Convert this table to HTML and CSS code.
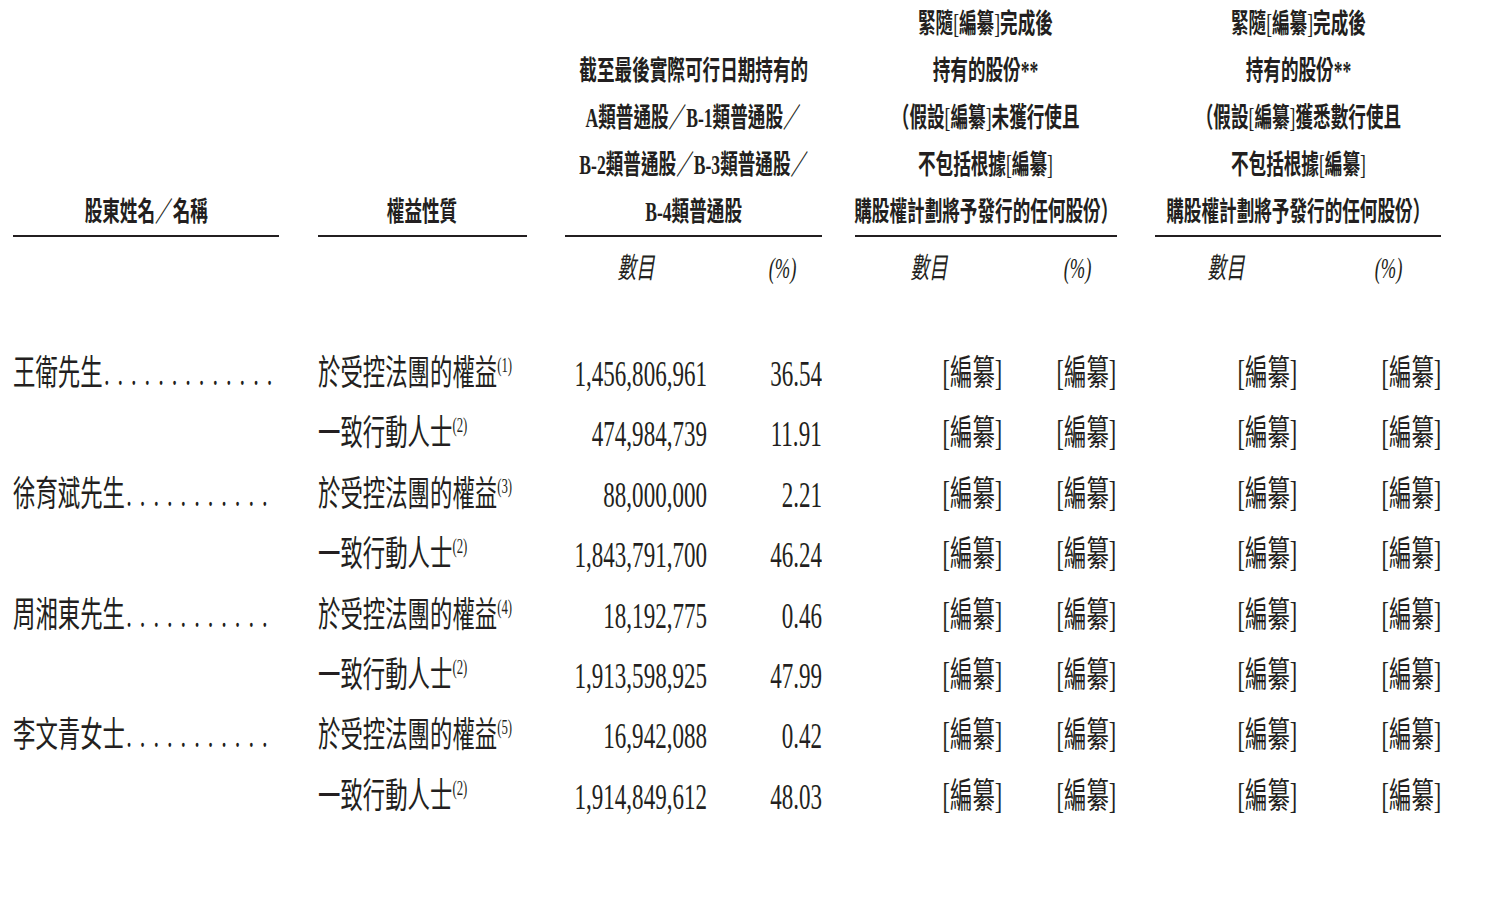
FILE: index.html
```html
<!DOCTYPE html>
<html lang="zh-Hant">
<head>
<meta charset="utf-8">
<title>股東權益</title>
<link rel="stylesheet" href="styles.css">
</head>
<body>
<main class="page">
  <div class="table">
    <div class="th col-name"><div>股東姓名／名稱</div></div>
    <div class="th col-nature"><div>權益性質</div></div>
    <div class="th col-g3">
      <div>截至最後實際可行日期持有的</div>
      <div>A類普通股／B-1類普通股／</div>
      <div>B-2類普通股／B-3類普通股／</div>
      <div>B-4類普通股</div>
    </div>
    <div class="th col-g4">
      <div>緊隨<span class="br">[</span>編纂<span class="br">]</span>完成後</div>
      <div>持有的股份**</div>
      <div>（假設<span class="br">[</span>編纂<span class="br">]</span>未獲行使且</div>
      <div>不包括根據<span class="br">[</span>編纂<span class="br">]</span></div>
      <div>購股權計劃將予發行的任何股份）</div>
    </div>
    <div class="th col-g5">
      <div>緊隨<span class="br">[</span>編纂<span class="br">]</span>完成後</div>
      <div>持有的股份**</div>
      <div>（假設<span class="br">[</span>編纂<span class="br">]</span>獲悉數行使且</div>
      <div>不包括根據<span class="br">[</span>編纂<span class="br">]</span></div>
      <div>購股權計劃將予發行的任何股份）</div>
    </div>

    <div class="sh amount first gap60"><span class="t">數目</span></div>
    <div class="sh pct"><span class="t">(%)</span></div>
    <div class="sh amount gap52"><span class="t">數目</span></div>
    <div class="sh pct"><span class="t">(%)</span></div>
    <div class="sh amount gap60"><span class="t">數目</span></div>
    <div class="sh pct wide"><span class="t">(%)</span></div>

    <div class="td name"><span class="t">王衛先生<span class="dots">.............</span></span></div>
    <div class="td nature"><span class="t">於受控法團的權益<sup>(1)</sup></span></div>
    <div class="td num"><span class="t">1,456,806,961</span></div>
    <div class="td num"><span class="t">36.54</span></div>
    <div class="td red"><span class="t">[編纂]</span></div>
    <div class="td red"><span class="t">[編纂]</span></div>
    <div class="td red"><span class="t">[編纂]</span></div>
    <div class="td red"><span class="t">[編纂]</span></div>

    <div class="td name"></div>
    <div class="td nature"><span class="t">一致行動人士<sup>(2)</sup></span></div>
    <div class="td num"><span class="t">474,984,739</span></div>
    <div class="td num"><span class="t">11.91</span></div>
    <div class="td red"><span class="t">[編纂]</span></div>
    <div class="td red"><span class="t">[編纂]</span></div>
    <div class="td red"><span class="t">[編纂]</span></div>
    <div class="td red"><span class="t">[編纂]</span></div>

    <div class="td name"><span class="t">徐育斌先生<span class="dots">...........</span></span></div>
    <div class="td nature"><span class="t">於受控法團的權益<sup>(3)</sup></span></div>
    <div class="td num"><span class="t">88,000,000</span></div>
    <div class="td num"><span class="t">2.21</span></div>
    <div class="td red"><span class="t">[編纂]</span></div>
    <div class="td red"><span class="t">[編纂]</span></div>
    <div class="td red"><span class="t">[編纂]</span></div>
    <div class="td red"><span class="t">[編纂]</span></div>

    <div class="td name"></div>
    <div class="td nature"><span class="t">一致行動人士<sup>(2)</sup></span></div>
    <div class="td num"><span class="t">1,843,791,700</span></div>
    <div class="td num"><span class="t">46.24</span></div>
    <div class="td red"><span class="t">[編纂]</span></div>
    <div class="td red"><span class="t">[編纂]</span></div>
    <div class="td red"><span class="t">[編纂]</span></div>
    <div class="td red"><span class="t">[編纂]</span></div>

    <div class="td name"><span class="t">周湘東先生<span class="dots">...........</span></span></div>
    <div class="td nature"><span class="t">於受控法團的權益<sup>(4)</sup></span></div>
    <div class="td num"><span class="t">18,192,775</span></div>
    <div class="td num"><span class="t">0.46</span></div>
    <div class="td red"><span class="t">[編纂]</span></div>
    <div class="td red"><span class="t">[編纂]</span></div>
    <div class="td red"><span class="t">[編纂]</span></div>
    <div class="td red"><span class="t">[編纂]</span></div>

    <div class="td name"></div>
    <div class="td nature"><span class="t">一致行動人士<sup>(2)</sup></span></div>
    <div class="td num"><span class="t">1,913,598,925</span></div>
    <div class="td num"><span class="t">47.99</span></div>
    <div class="td red"><span class="t">[編纂]</span></div>
    <div class="td red"><span class="t">[編纂]</span></div>
    <div class="td red"><span class="t">[編纂]</span></div>
    <div class="td red"><span class="t">[編纂]</span></div>

    <div class="td name"><span class="t">李文青女士<span class="dots">...........</span></span></div>
    <div class="td nature"><span class="t">於受控法團的權益<sup>(5)</sup></span></div>
    <div class="td num"><span class="t">16,942,088</span></div>
    <div class="td num"><span class="t">0.42</span></div>
    <div class="td red"><span class="t">[編纂]</span></div>
    <div class="td red"><span class="t">[編纂]</span></div>
    <div class="td red"><span class="t">[編纂]</span></div>
    <div class="td red"><span class="t">[編纂]</span></div>

    <div class="td name"></div>
    <div class="td nature"><span class="t">一致行動人士<sup>(2)</sup></span></div>
    <div class="td num"><span class="t">1,914,849,612</span></div>
    <div class="td num"><span class="t">48.03</span></div>
    <div class="td red"><span class="t">[編纂]</span></div>
    <div class="td red"><span class="t">[編纂]</span></div>
    <div class="td red"><span class="t">[編纂]</span></div>
    <div class="td red"><span class="t">[編纂]</span></div>
  </div>
</main>
</body>
</html>
```

FILE: styles.css
```css
html, body {
  margin: 0;
  background: #ffffff;
}

body {
  overflow: hidden;
  color: #231f20;
  font-family: "Liberation Serif", "Noto Sans CJK TC", serif;
}

.page {
  padding-left: 12.8px;
}

.table {
  display: grid;
  grid-template-columns: 266.24px 247.68px 180.48px 114.56px 180.48px 114.56px 180.48px 144px;
}

/* The source typeface is condensed: every text run is set at normal
   proportions and compressed horizontally. */
.t,
.th > div {
  display: inline-block;
  transform: scaleX(0.64);
  white-space: nowrap;
}

/* header */
.th {
  align-self: end;
  display: flex;
  flex-direction: column;
  align-items: center;
  border-bottom: 2px solid #231f20;
  font-size: 27.5px;
  line-height: 47px;
  font-weight: 700;
}

.th > div {
  transform-origin: 50% 50%;
}

.th .br {
  font-weight: 400;
}

.col-nature {
  margin-left: 39px;
}

.col-g3 {
  grid-column: span 2;
  margin-left: 38.4px;
}

.col-g4 {
  grid-column: span 2;
  margin-left: 33.3px;
}

.col-g5 {
  grid-column: span 2;
  margin-left: 38.4px;
}

/* sub header */
.sh {
  font-style: italic;
  font-size: 29px;
  line-height: 47px;
  margin-top: 8px;
  margin-bottom: 52px;
}

.sh.first {
  grid-column: 3;
}

.sh.amount {
  text-align: center;
}

.sh.amount .t {
  transform-origin: 50% 50%;
}

.sh.gap60 {
  margin-left: 38.4px;
}

.sh.gap52 {
  margin-left: 33.3px;
}

.sh.pct {
  text-align: right;
  padding-right: 25px;
}

.sh.pct .t {
  transform-origin: 100% 50%;
}

.sh.pct.wide {
  padding-right: 39px;
}

/* body rows */
.td {
  font-size: 35px;
  line-height: 60.4px;
}

.td.name .t,
.td.nature .t {
  transform-origin: 0 50%;
}

.td.nature {
  padding-left: 39px;
}

.td.num,
.td.red {
  display: flex;
  justify-content: flex-end;
}

.td.num .t,
.td.red .t {
  flex: none;
  transform-origin: 100% 50%;
}

.td.num {
  font-size: 36px;
}

.dots {
  letter-spacing: 12.45px;
  margin-left: 2px;
}

sup {
  font-size: 20px;
  line-height: 0;
  vertical-align: super;
}
```
